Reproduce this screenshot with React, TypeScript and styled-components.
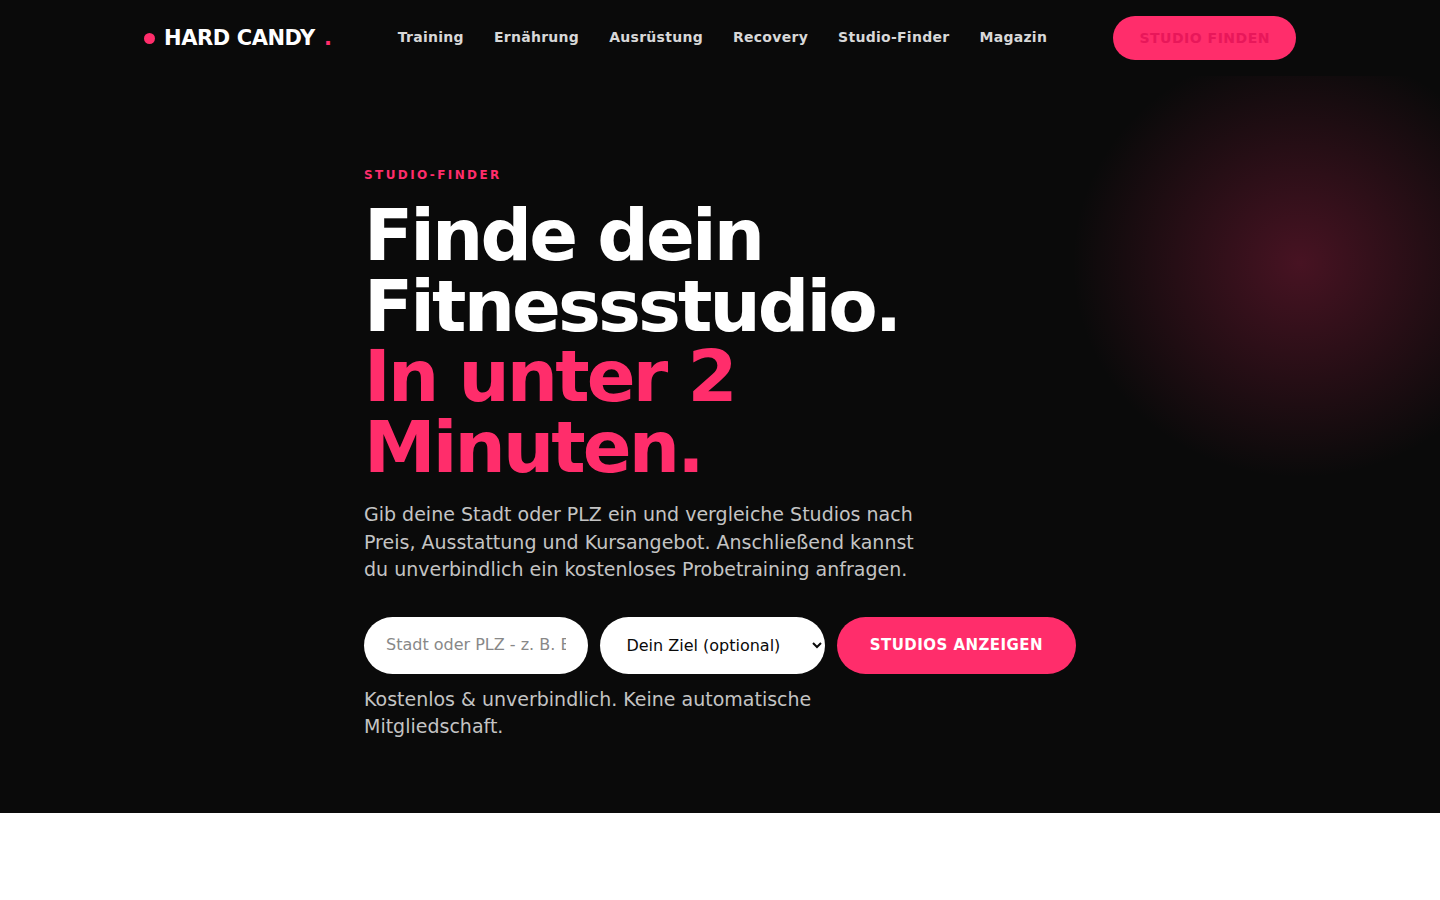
import React from "react";
import styled, { createGlobalStyle } from "styled-components";

const GlobalStyle = createGlobalStyle`
  *, *::before, *::after { box-sizing: border-box; }
  body {
    margin: 0;
    background: #fff;
    color: #0a0a0a;
    font-family: "DejaVu Sans", sans-serif;
    font-size: 16px;
  }
`;

const Header = styled.header`
  background: #0a0a0a;
  color: #fff;
`;

const HeaderInner = styled.div`
  display: flex;
  align-items: center;
  justify-content: space-between;
  max-width: 1200px;
  margin: 0 auto;
  padding: 16px 24px;
`;

const Logo = styled.a`
  display: flex;
  align-items: center;
  gap: 9px;
  color: #fff;
  font-size: 21px;
  font-weight: 700;
  line-height: 34px;
  letter-spacing: -0.02em;
  text-decoration: none;
`;

const LogoDot = styled.span`
  width: 11px;
  height: 11px;
  border-radius: 50%;
  background: #ff2d6b;
`;

const Accent = styled.span`
  color: #ff2d6b;
`;

const Nav = styled.nav`
  display: flex;
  gap: 30px;
  padding-bottom: 2px;
`;

const NavLink = styled.a`
  color: #d8d8d8;
  font-size: 14px;
  font-weight: 700;
  line-height: 22px;
  letter-spacing: 0.02em;
  text-decoration: none;
`;

const HeaderButton = styled.a`
  padding: 11px 26px;
  border-radius: 999px;
  background: #ff2d6b;
  color: #e8175a;
  font-size: 14px;
  font-weight: 700;
  line-height: 22px;
  letter-spacing: 0.5px;
  text-decoration: none;
  text-transform: uppercase;
`;

const Hero = styled.section`
  position: relative;
  overflow: hidden;
  padding: 88px 24px 72px;
  background: #0a0a0a;
  color: #fff;
`;

const Glow = styled.div`
  position: absolute;
  top: -30px;
  right: -90px;
  width: 460px;
  height: 434px;
  background: radial-gradient(rgba(255, 45, 107, 0.25) 0%, transparent 70%);
`;

const HeroInner = styled.div`
  position: relative;
  max-width: 712px;
  margin: 0 auto;
`;

const Eyebrow = styled.p`
  margin: 0 0 14px;
  color: #ff2d6b;
  font-size: 12px;
  font-weight: 700;
  line-height: 22px;
  letter-spacing: 0.2em;
  text-transform: uppercase;
`;

const Title = styled.h1`
  max-width: 600px;
  margin: 0 0 19px;
  font-size: 72px;
  font-weight: 700;
  line-height: 0.98;
  letter-spacing: -0.04em;
`;

const Lead = styled.p`
  max-width: 560px;
  margin: 0;
  color: #c4c4c4;
  font-size: 19px;
  line-height: 1.45;
`;

const SearchForm = styled.form`
  display: grid;
  grid-template-columns: 1fr 1fr auto;
  gap: 12px;
  margin: 33px 0 12px;
`;

const CityInput = styled.input`
  min-width: 0;
  height: 57px;
  padding: 0 22px 2px;
  border: 0;
  border-radius: 999px;
  background: #fff;
  font: inherit;
  &::placeholder { color: #888; }
`;

const GoalSelect = styled.select`
  min-width: 0;
  height: 57px;
  padding: 0 0 0 22px;
  border: 0;
  border-radius: 999px;
  background: #fff;
  color: #0a0a0a;
  font: inherit;
`;

const SubmitButton = styled.button`
  height: 57px;
  padding: 0 33px 1px;
  border: 0;
  border-radius: 999px;
  background: #ff2d6b;
  color: #fff;
  font: inherit;
  font-size: 15px;
  font-weight: 700;
  letter-spacing: 0.03em;
  text-transform: uppercase;
`;

const links = ["Training", "Ernährung", "Ausrüstung", "Recovery", "Studio-Finder", "Magazin"];

export default function App() {
  return (
    <>
      <GlobalStyle />
      <Header>
        <HeaderInner>
          <Logo href="#">
            <LogoDot />
            HARD CANDY <Accent>.</Accent>
          </Logo>
          <Nav>
            {links.map((label) => (
              <NavLink key={label} href="#">{label}</NavLink>
            ))}
          </Nav>
          <HeaderButton href="#finder">Studio finden</HeaderButton>
        </HeaderInner>
      </Header>
      <main>
        <Hero id="finder">
          <Glow />
          <HeroInner>
            <Eyebrow>Studio-Finder</Eyebrow>
            <Title>
              Finde dein Fitnessstudio. <Accent>In unter 2 Minuten.</Accent>
            </Title>
            <Lead>
              Gib deine Stadt oder PLZ ein und vergleiche Studios nach Preis, Ausstattung und
              Kursangebot. Anschließend kannst du unverbindlich ein kostenloses Probetraining anfragen.
            </Lead>
            <SearchForm>
              <CityInput type="text" aria-label="Stadt oder PLZ" placeholder="Stadt oder PLZ - z. B. Berlin" />
              <GoalSelect aria-label="Dein Ziel">
                <option>Dein Ziel (optional)</option>
                <option>Abnehmen</option>
                <option>Muskelaufbau</option>
              </GoalSelect>
              <SubmitButton type="button">Studios anzeigen</SubmitButton>
            </SearchForm>
            <Lead>Kostenlos &amp; unverbindlich. Keine automatische Mitgliedschaft.</Lead>
          </HeroInner>
        </Hero>
      </main>
    </>
  );
}
